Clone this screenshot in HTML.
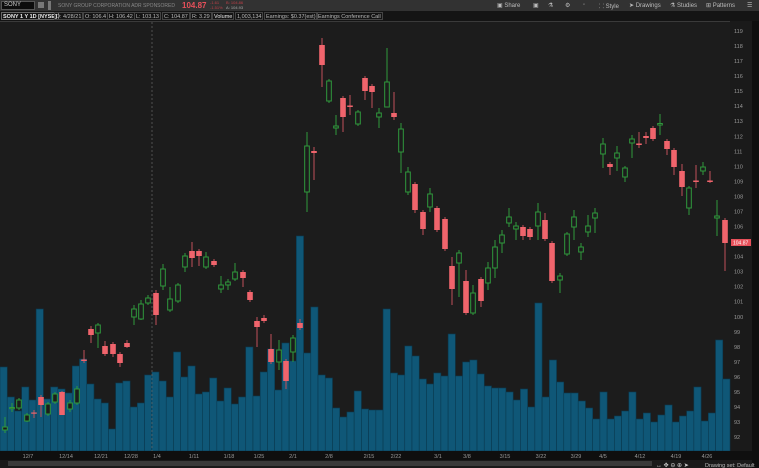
<!DOCTYPE html>
<html><head><meta charset="utf-8"><style>
*{margin:0;padding:0;box-sizing:border-box}
body{width:759px;height:468px;background:#1c1c1c;overflow:hidden;font-family:"Liberation Sans",sans-serif;position:relative}
#top{position:absolute;left:0;top:0;width:759px;height:11px;background:#323232;font-size:6px;color:#9a9a9a}
#top span{position:absolute;top:2px;white-space:nowrap}
#row2{position:absolute;left:0;top:11px;width:759px;height:10px;background:#141414;font-size:5.5px;color:#bbb}
#row2 span{position:absolute;top:1px;height:8px;line-height:8px;border:1px solid #444;padding:0 1px;white-space:nowrap}
svg{position:absolute;left:0;top:0}
</style></head><body>
<div id="top">
<span style="left:1px;top:1px;width:34px;height:9px;background:#0c0c0c;border:1px solid #555;color:#ccc;padding-left:2px;line-height:7px">SONY</span>
<span style="left:38px;top:2px;width:6px;height:6px;background:#777"></span>
<span style="left:48px;top:1px;width:3px;height:9px;background:#777"></span>
<span style="left:58px;top:3px;color:#888;font-size:5px">SONY GROUP CORPORATION ADR SPONSORED</span>
<span style="left:182px;top:1px;color:#e8505a;font-weight:bold;font-size:8px">104.87</span>
<span style="left:210px;top:0;color:#c04048;font-size:4px;line-height:5px">-1.61<br>-1.51%</span>
<span style="left:226px;top:0;color:#c04048;font-size:4px;line-height:5px">B: 104.86<br><span style="position:static;color:#aaa">A: 104.93</span></span>
<span style="left:497px;color:#bbb">▣ Share</span>
<span style="left:533px;color:#bbb">▣</span>
<span style="left:548px;color:#bbb">⚗</span>
<span style="left:565px;color:#bbb">⚙</span>
<span style="left:583px;color:#bbb">◦</span>
<span style="left:599px;color:#bbb">⸬ Style</span>
<span style="left:629px;color:#bbb">➤ Drawings</span>
<span style="left:670px;color:#bbb">⚗ Studies</span>
<span style="left:706px;color:#bbb">⊞ Patterns</span>
<span style="left:747px;color:#bbb">☰</span>
</div>
<div id="row2">
<span style="left:1px;color:#eee;font-weight:bold;border-color:#666">SONY 1 Y 1D [NYSE]</span>
<span style="left:54px">D: 4/28/21</span>
<span style="left:83px">O: 106.4</span>
<span style="left:107px">H: 106.42</span>
<span style="left:134px">L: 103.13</span>
<span style="left:162px">C: 104.87</span>
<span style="left:190px">R: 3.29</span>
<span style="left:212px;color:#eee">Volume</span>
<span style="left:235px">1,003,134</span>
<span style="left:264px">Earnings: $0.37(est)</span>
<span style="left:316px">Earnings Conference Call</span>
</div>
<svg id="c" width="759" height="468"></svg>
<script>
var s='';
var Y=function(p){return 31+(119-p)*15.04;};
s+='<rect x="730" y="21" width="29" height="430" fill="#1a1a1a"/><rect x="752" y="21" width="7" height="447" fill="#0e0e0e"/>';
s+='<line x1="0" y1="21.5" x2="730" y2="21.5" stroke="#3a3a3a" stroke-width="1"/>';
for(var p=92;p<=119;p++){s+='<text x="734" y="'+(Y(p)+2)+'" fill="#999" font-size="5.5" font-family="Liberation Sans">'+p+'</text>';}
var v=[367,397,411,387,400,309,399,387,389,393,366,359,384,399,403,429,383,381,407,403,375,372,381,397,352,377,366,394,392,378,401,388,404,397,347,396,372,349,390,343,361,236,353,307,375,378,408,417,412,391,409,410,410,309,373,375,346,356,379,384,373,376,334,376,362,360,374,386,388,388,392,400,389,407,303,397,360,382,393,393,401,408,419,392,419,416,411,392,419,413,422,415,405,422,416,411,387,421,413,340,379];
var w=730/v.length;
for(var i=0;i<v.length;i++){s+='<rect x="'+(i*w).toFixed(2)+'" y="'+v[i]+'" width="'+w.toFixed(2)+'" height="'+(451-v[i])+'" fill="#0f5777" stroke="#0a3a50" stroke-width="0.6"/>';}
s+='<line x1="152" y1="22" x2="152" y2="451" stroke="#666" stroke-dasharray="2,2" stroke-width="0.7"/>';
var c=[[5,'g',427,430,417,433],[12,'g',407.5,408.5,403,412],[19,'g',400,408,398,410],[27,'g',415,421,413,422],[34,'r',412.5,413.5,410,418],[41,'r',397,405,395,417],[48,'g',404,414,402,416],[55,'g',394,402,392,404],[62,'r',392,415,391,415],[70,'g',403,409,400,412],[77,'g',389,403,386,405],
[84,'r',359.5,361,350,363],[91,'r',329,335,326,343],[98,'g',325,333,323,348],[105,'r',346,354,341,356],[113,'r',344,354,342,357],[120,'r',354,363,352,367],[127,'r',343,347,340,348],[134,'g',309,317,305,325],[141,'g',304,319,300,320],[148,'g',298,303,295,305],[156,'r',293,315,290,325],[163,'g',269,286,264,290],[170,'g',299,310,287,312],[178,'g',285,301,283,303],[185,'g',256,267,253,272],[192,'r',251,258,242,267],[199,'r',251,256,249,266],[206,'g',257,267,252,269],[214,'r',261,265,259,267],[221,'g',285,289,276,293],[228,'g',282,285,279,290],[235,'g',272,279,263,281],[243,'r',272,278,270,287],[250,'r',292,300,290,302],[257,'r',321,327,317,347],[264,'r',318,321,315,323],[271,'r',349,362,334,364],[279,'g',350,362,340,370],[286,'r',361,381,359,389],[293,'g',338,352,335,362],[300,'r',323,328,319,330],
[307,'g',146,192,132,212],[314,'r',151,153,147,180],[322,'r',45,65,38,87],[329,'g',81,101,79,103],[336,'g',126,128,115,135],[343,'r',98,117,96,132],[350,'r',105.5,107,95,115],[358,'g',112,124,110,126],[365,'r',78,91,76,100],[372,'r',86,92,84,108],[379,'g',113,117,108,128],[387,'g',82,107,48,107],[394,'r',113,117,92,120],[401,'g',129,152,123,173],[408,'g',172,192,167,195],[415,'r',184,210,182,213],[423,'r',212,229,210,235],[430,'g',194,207,188,212],[437,'r',208,230,206,232],[445,'r',219,249,217,251],
[452,'r',266,289,257,305],[459,'g',253,263,250,297],[466,'r',281,313,270,315],[473,'g',293,313,285,315],[481,'r',279,301,277,307],[488,'g',268,283,262,290],[495,'g',247,268,240,278],[502,'g',235,243,230,253],[509,'g',217,223,208,227],[516,'g',226,229,222,240],[523,'r',227,236,225,240],[530,'r',229,237,227,240],[538,'g',212,226,203,240],[545,'r',220,239,213,241],[552,'r',243,281,241,283],[560,'g',276,280,273,293],[567,'g',234,254,232,256],[574,'g',217,227,210,240],[581,'g',247,252,243,260],[588,'g',226,232,215,237],[595,'g',213,218,208,233],
[603,'g',144,154,138,168],[610,'r',164,167,162,175],[617,'g',153,158,146,171],[625,'g',168,177,166,182],[632,'g',139,143,135,158],[639,'r',143.5,145,132,148],[646,'r',136,138,132,144],[653,'r',128,139,126,141],[660,'g',123.5,125,114,135],[667,'r',141,149,139,155],[674,'r',150,167,148,175],[682,'r',171,187,164,196],[689,'g',188,208,186,215],[696,'r',180.5,182,165,188],[703,'g',167,171,162,175],[710,'r',180.5,182,171,183],[717,'g',216,218,200,236],[725,'r',220,243,218,271]];
c.forEach(function(k){var col=k[1]=='g'?'#2f9a3c':'#f0646c';
s+='<line x1="'+k[0]+'" y1="'+k[4]+'" x2="'+k[0]+'" y2="'+k[5]+'" stroke="'+(k[1]=='g'?col:'#c0505a')+'" stroke-width="1"/>';
var h=Math.max(k[3]-k[2],1.2);
if(k[1]=='g')s+='<rect x="'+(k[0]-2.3)+'" y="'+k[2]+'" width="4.6" height="'+h+'" fill="#1c1c1c" stroke="'+col+'" stroke-width="1"/>';
else s+='<rect x="'+(k[0]-2.8)+'" y="'+k[2]+'" width="5.6" height="'+h+'" fill="'+col+'"/>';});
s+='<rect x="731" y="239" width="20" height="7" fill="#e8505a"/><text x="733" y="244.5" fill="#fff" font-size="5" font-family="Liberation Sans">104.87</text>';
s+='<rect x="0" y="451" width="752" height="9" fill="#0f0f0f"/><rect x="0" y="460" width="752" height="8" fill="#1a1a1a"/>';
s+='<rect x="8" y="461" width="644" height="5" fill="#3a3a3a"/>';
var d=[[28,'12/7'],[66,'12/14'],[101,'12/21'],[131,'12/28'],[157,'1/4'],[194,'1/11'],[229,'1/18'],[259,'1/25'],[293,'2/1'],[329,'2/8'],[369,'2/15'],[396,'2/22'],[438,'3/1'],[467,'3/8'],[505,'3/15'],[541,'3/22'],[576,'3/29'],[603,'4/5'],[640,'4/12'],[676,'4/19'],[707,'4/26']];
d.forEach(function(k){s+='<text x="'+k[0]+'" y="458" fill="#999" font-size="5.5" text-anchor="middle" font-family="Liberation Sans">'+k[1]+'</text>';});
s+='<text x="656" y="467" fill="#ccc" font-size="6" font-family="Liberation Sans">↔ ✥ ⊖ ⊕ ➤</text><text x="705" y="467" fill="#bbb" font-size="5.5" font-family="Liberation Sans">Drawing set: Default</text>';
document.getElementById('c').innerHTML=s;
</script>
</body></html>
